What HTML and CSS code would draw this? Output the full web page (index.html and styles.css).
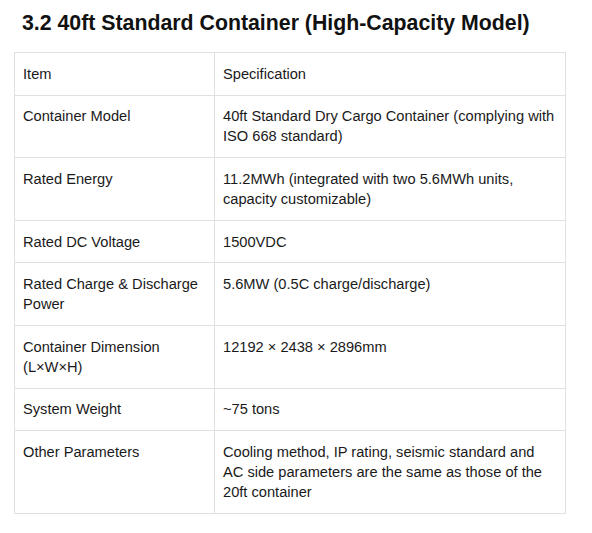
FILE: index.html
```html
<!DOCTYPE html>
<html>
<head>
<meta charset="utf-8">
<link rel="stylesheet" href="styles.css">
</head>
<body>
<div class="page">
  <h3 class="title">3.2 40ft Standard Container (High-Capacity Model)</h3>
  <table class="spec">
    <tr><td class="c1">Item</td><td class="c2">Specification</td></tr>
    <tr><td class="c1">Container Model</td><td class="c2">40ft Standard Dry Cargo Container (complying with ISO 668 standard)</td></tr>
    <tr><td class="c1">Rated Energy</td><td class="c2">11.2MWh (integrated with two 5.6MWh units, capacity customizable)</td></tr>
    <tr><td class="c1">Rated DC Voltage</td><td class="c2">1500VDC</td></tr>
    <tr><td class="c1">Rated Charge &amp; Discharge Power</td><td class="c2">5.6MW (0.5C charge/discharge)</td></tr>
    <tr><td class="c1">Container Dimension (L×W×H)</td><td class="c2">12192 × 2438 × 2896mm</td></tr>
    <tr><td class="c1">System Weight</td><td class="c2">~75 tons</td></tr>
    <tr><td class="c1">Other Parameters</td><td class="c2">Cooling method, IP rating, seismic standard and AC side parameters are the same as those of the 20ft container</td></tr>
  </table>
</div>
</body>
</html>
```
FILE: styles.css
```css
html, body {
  margin: 0;
  padding: 0;
  background: #ffffff;
}
.page {
  padding: 10px 14px 0 14px;
  font-family: "Liberation Sans", Arial, sans-serif;
  color: #1a1a1a;
}
.title {
  margin: 0 0 16px 8px;
  font-size: 21.3px;
  line-height: 26px;
  font-weight: bold;
  color: #111111;
}
.spec {
  border-collapse: collapse;
  width: 552px;
  font-size: 14.65px;
  line-height: 20px;
}
.spec td {
  border: 1px solid #e0e0e0;
  padding: 10.8px 8px;
  vertical-align: top;
  text-align: left;
}
.spec .c1 {
  width: 183px;
}
```
